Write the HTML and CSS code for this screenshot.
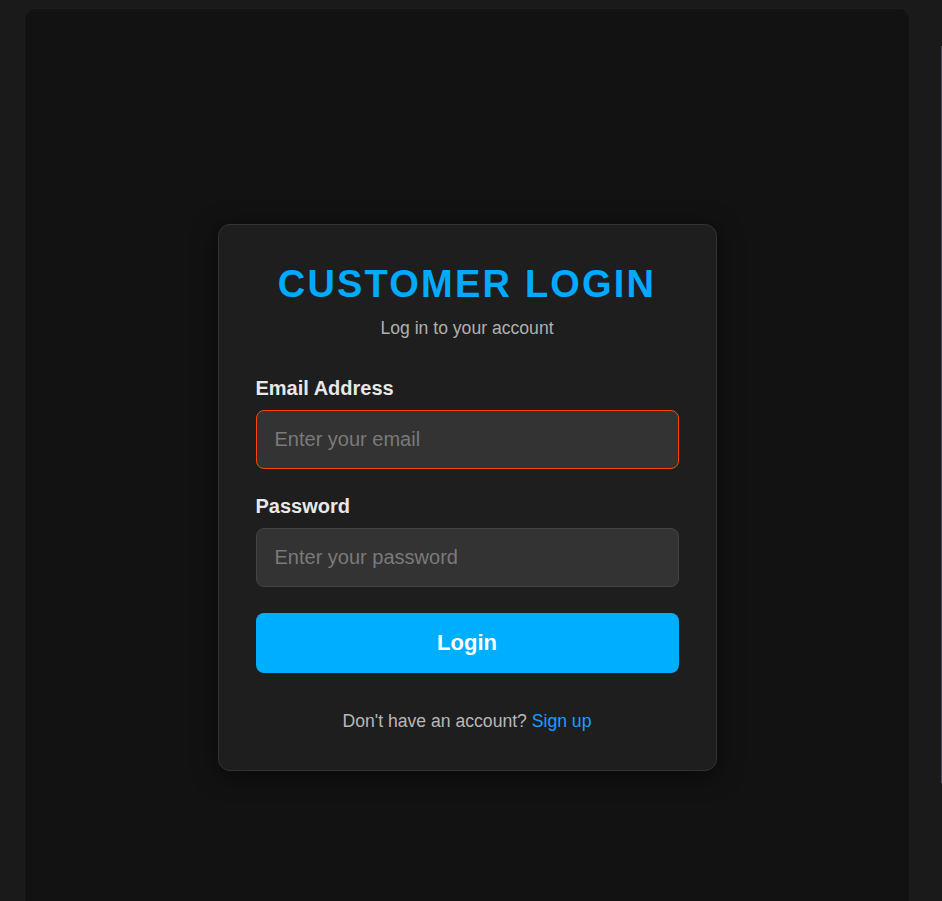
FILE: index.html
```html
<!DOCTYPE html>
<html lang="en">
<head>
<meta charset="utf-8">
<title>Customer Login</title>
<link rel="stylesheet" href="styles.css">
</head>
<body>
<div class="side-edge"></div>
<main class="app">
  <section class="card">
    <h1 class="card-title">CUSTOMER LOGIN</h1>
    <p class="card-subtitle">Log in to your account</p>
    <form class="login-form">
      <div class="form-group">
        <label class="form-label" for="email">Email Address</label>
        <input class="form-input is-active" id="email" type="email" placeholder="Enter your email">
      </div>
      <div class="form-group">
        <label class="form-label" for="password">Password</label>
        <input class="form-input" id="password" type="password" placeholder="Enter your password">
      </div>
      <button class="btn-login" type="button">Login</button>
    </form>
    <p class="card-footer">Don't have an account? <a class="link" href="#">Sign up</a></p>
  </section>
</main>
</body>
</html>
```
FILE: styles.css
```css
* { box-sizing: border-box; }

html, body {
  margin: 0;
  padding: 0;
  background: #1a1a1a;
  font-family: "Liberation Sans", Arial, sans-serif;
  overflow: hidden;
}

.app {
  margin: 8px 32px 0 24px;
  width: 886px;
  min-height: 980px;
  background: #121212;
  border: 1px solid #1d1d1d;
  border-bottom: none;
  border-radius: 12px 12px 0 0;
  display: flex;
  justify-content: center;
  align-items: flex-start;
  padding-top: 215px;
}

.side-edge {
  position: fixed;
  left: 941px;
  top: 46px;
  width: 1px;
  height: 737px;
  background: #4c4c5c;
}

.card {
  width: 499px;
  background: #1e1e1e;
  border: 1px solid #333;
  border-radius: 12px;
  padding: 38px 37px 38px;
  box-shadow: 0 4px 24px rgba(0, 0, 0, 0.55);
  text-align: center;
}

.card-title {
  margin: 0 0 12px;
  font-size: 38px;
  font-weight: bold;
  letter-spacing: 2.2px;
  color: #00aaff;
  line-height: normal;
}

.card-subtitle {
  margin: 0 0 38px;
  font-size: 17.6px;
  color: #b0b0b0;
}

.login-form {
  display: flex;
  flex-direction: column;
  text-align: left;
}

.form-group {
  display: flex;
  flex-direction: column;
  margin-bottom: 26px;
}

.form-label {
  font-size: 20px;
  font-weight: bold;
  color: #e8e8e8;
  margin-bottom: 10px;
  line-height: 23px;
}

.form-input {
  width: 100%;
  height: 59px;
  padding: 0 18px;
  font-family: inherit;
  font-size: 20px;
  color: #eee;
  background: #333;
  border: 1px solid #444;
  border-radius: 8px;
  outline: none;
}

.form-input::placeholder {
  color: #7a7a7a;
}

.form-input.is-active {
  border-color: #ff4500;
}

.btn-login {
  height: 60px;
  width: 100%;
  border: none;
  border-radius: 8px;
  background: #00aeff;
  color: #fff;
  font-family: inherit;
  font-size: 22px;
  font-weight: bold;
  cursor: pointer;
}

.card-footer {
  margin: 38px 0 0;
  font-size: 17.6px;
  color: #b8b8b8;
}

.link {
  color: #1a9eff;
  text-decoration: none;
}
```
